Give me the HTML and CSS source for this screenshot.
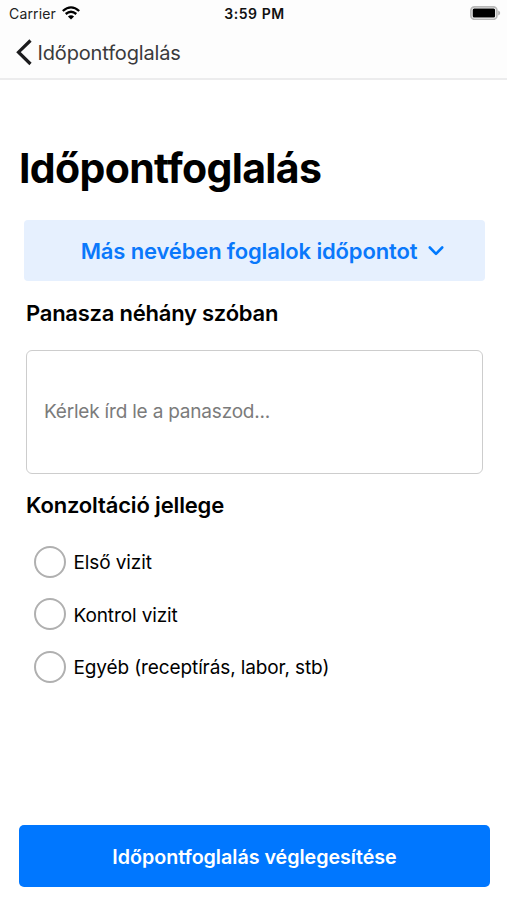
FILE: index.html
```html
<!DOCTYPE html>
<html lang="hu">
<head>
<meta charset="utf-8">
<title>Időpontfoglalás</title>
<link rel="stylesheet" href="styles.css">
</head>
<body>
<div class="status">
  <div class="carrier"><span class="t carrier-name">Carrier</span>
    <svg class="wifi" width="18" height="14" viewBox="0 0 18 14"><path d="M.8 5Q9-2.300 17.200 5M3.700 8Q9 3.500 14.300 8" fill="none" stroke="#000" stroke-width="2.300"/><path d="M5.900 10.400Q9 7.900 12.100 10.400L9 13.500Z"/></svg>
  </div>
  <span class="t time">3:59 PM</span>
  <svg class="battery" width="31" height="14" viewBox="0 0 31 14"><rect x=".9" y=".9" width="26" height="12.400" rx="3.600" fill="#fff" stroke="#b8b8b8" stroke-width="1.700"/><rect x="2.700" y="2.600" width="22.400" height="9" rx="1.500"/><path d="M28.200 4.600v5q2-.8 2-2.500t-2-2.500" fill="#b0b0b0"/></svg>
</div>
<header class="nav">
  <svg width="18" height="28" viewBox="0 0 18 28"><path d="M15.500 1.500L3.500 13.200 15.500 25" fill="none" stroke="#1c1c1e" stroke-width="3.200"/></svg>
  <span class="t back">Időpontfoglalás</span>
</header>
<main>
  <h1><span class="t title">Időpontfoglalás</span></h1>
  <button class="other"><span class="t other-label">Más nevében foglalok időpontot</span>
    <svg width="16" height="10" viewBox="0 0 16 10"><path d="M1.800 1.500L8 7.800l6.200-6.300" fill="none" stroke="#007aff" stroke-width="2.600" stroke-linecap="round" stroke-linejoin="round"/></svg>
  </button>
  <h2><span class="t complaint">Panasza néhány szóban</span></h2>
  <div class="input"><span class="t hint">Kérlek írd le a panaszod...</span></div>
  <h2 class="kind-heading"><span class="t kind">Konzoltáció jellege</span></h2>
  <div class="options">
    <label><i></i><span class="t first">Első vizit</span></label>
    <label><i></i><span class="t control">Kontrol vizit</span></label>
    <label><i></i><span class="t misc">Egyéb (receptírás, labor, stb)</span></label>
  </div>
  <button class="submit"><span class="t submit-label">Időpontfoglalás véglegesítése</span></button>
</main>
</body>
</html>
```
FILE: styles.css
```css
*{box-sizing:border-box}
body{margin:0;width:507px;height:900px;background:#fff;color:#000;font-family:Inter,"Liberation Sans",sans-serif;overflow:hidden}
.t{white-space:nowrap}
.status{height:28px;display:grid;grid-template-columns:1fr auto 1fr;align-items:center;padding:0 6px 2px 9px;font-size:14px;background:#fdfdfd}
.carrier{display:flex;align-items:center;gap:6px;letter-spacing:.15px;color:#222}
.time{font-weight:600;letter-spacing:.55px;color:#111;margin-left:-1px}
.battery{justify-self:end}
.nav{height:52px;display:flex;align-items:center;padding:0 0 0 14.5px;gap:5px;border-bottom:2px solid #ececed;background:#fdfdfd;font-size:20px;letter-spacing:-.15px;color:#3a3a3c}
main{display:flex;flex-direction:column;padding:0 18px}
h1{margin:61px 0 0 1px;height:54px;line-height:54px;font-size:41px;letter-spacing:-.65px}
button{border:0;font-family:inherit;display:flex;align-items:center;justify-content:center}
.other{margin:24.5px 4px 0 6px;height:61.5px;padding:2px 0 0 16px;border-radius:4px;background:#e6f0fe;color:#0a78fb;font-size:22px;font-weight:600;letter-spacing:-.14px;gap:11px}
h2{margin:17px 0 0 8px;height:30px;line-height:30px;font-size:22px;font-weight:600;letter-spacing:-.24px}
.kind-heading{margin-top:16px;letter-spacing:-.16px}
.input{margin:21.5px 6.5px 0 8px;height:124.5px;border:1.5px solid #cdcdcd;border-radius:6px;display:flex;align-items:center;padding-left:17px;font-size:19px;letter-spacing:-.2px;color:#7b7b7b}
.options{margin:15.5px 0 0 16px;display:grid;grid-template-rows:repeat(3,52.5px);font-size:19px;letter-spacing:-.11px}
label{display:flex;align-items:center;gap:7.5px}
label .t{padding-top:2px}
i{width:32px;height:32px;border:2px solid #b0b0b0;border-radius:50%}
.submit{margin:132px -1px 0 1px;height:62px;padding:1px 0 0;background:#0077ff;color:#fff;border-radius:5px;font-size:19.7px;font-weight:600;letter-spacing:-.03px}
```
